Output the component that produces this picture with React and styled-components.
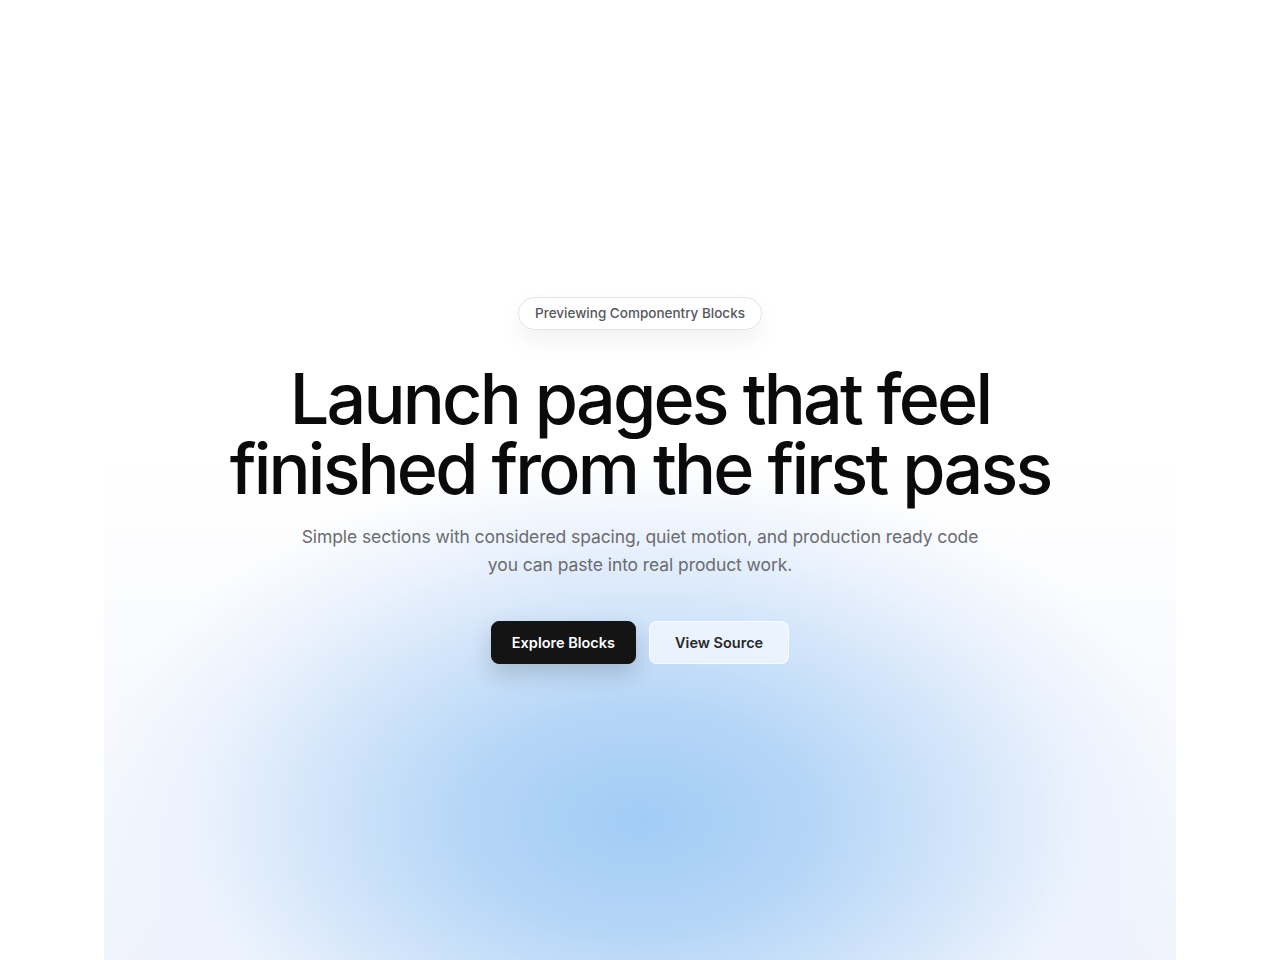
import React from 'react'
import styled, { createGlobalStyle } from 'styled-components'

const Global = createGlobalStyle`
  html, body {
    margin: 0;
    padding: 0;
    background: #ffffff;
  }
  body {
    font-family: Inter, "Noto Sans", "Liberation Sans", sans-serif;
    -webkit-font-smoothing: antialiased;
  }
  * { box-sizing: border-box; }
`

const Hero = styled.section`
  width: 1072px;
  min-height: 960px;
  margin: 0 auto;
  display: flex;
  flex-direction: column;
  align-items: center;
  justify-content: center;
  text-align: center;
  overflow: hidden;
  background:
    radial-gradient(ellipse 560px 360px at 50% 820px,
      #a2ccf5 0%, #b4d5f7 30%, #d3e5fa 58%, #ecf3fd 80%, rgba(248, 251, 255, 0) 100%),
    radial-gradient(ellipse 620px 300px at 50% 100%,
      rgba(178, 200, 246, 0.55) 0%, rgba(220, 228, 250, 0.3) 60%, rgba(255, 255, 255, 0) 100%),
    linear-gradient(to bottom, #ffffff 0%, #ffffff 48%, #f6f8fd 80%, #f3f5fc 100%);
`

const Badge = styled.div`
  height: 33px;
  padding: 0 16px;
  display: inline-flex;
  align-items: center;
  border: 1px solid #e4e4e7;
  border-radius: 999px;
  background: #ffffff;
  color: #56565c;
  font-size: 13.5px;
  font-weight: 500;
  box-shadow: 0 10px 24px rgba(0, 0, 0, 0.06);
`

const Title = styled.h1`
  margin: 34px 0 0;
  font-size: 70px;
  line-height: 70px;
  font-weight: 500;
  letter-spacing: -0.04em;
  color: #0a0a0a;
`

const Lead = styled.p`
  margin: 19px 0 0;
  max-width: 700px;
  font-size: 17.5px;
  line-height: 28px;
  letter-spacing: -0.005em;
  color: #6b6b70;
`

const Actions = styled.div`
  margin-top: 42px;
  display: flex;
  gap: 13px;
`

const Button = styled.button`
  height: 43px;
  padding: 0 ${p => (p.$primary ? '20px' : '25px')};
  border-radius: 8px;
  font-family: inherit;
  font-size: 14.5px;
  font-weight: 600;
  cursor: pointer;
  border: 1px solid ${p => (p.$primary ? '#141414' : 'rgba(255, 255, 255, 0.7)')};
  background: ${p => (p.$primary ? '#141414' : 'rgba(240, 246, 253, 0.85)')};
  color: ${p => (p.$primary ? '#ffffff' : '#27272a')};
  box-shadow: ${p => (p.$primary ? '0 10px 22px rgba(20, 20, 40, 0.18)' : 'none')};
`

export default function App() {
  return (
    <>
      <Global />
      <Hero>
        <Badge>Previewing Componentry Blocks</Badge>
        <Title>
          Launch pages that feel
          <br />
          finished from the first pass
        </Title>
        <Lead>
          Simple sections with considered spacing, quiet motion, and production ready code
          you can paste into real product work.
        </Lead>
        <Actions>
          <Button $primary>Explore Blocks</Button>
          <Button>View Source</Button>
        </Actions>
      </Hero>
    </>
  )
}
